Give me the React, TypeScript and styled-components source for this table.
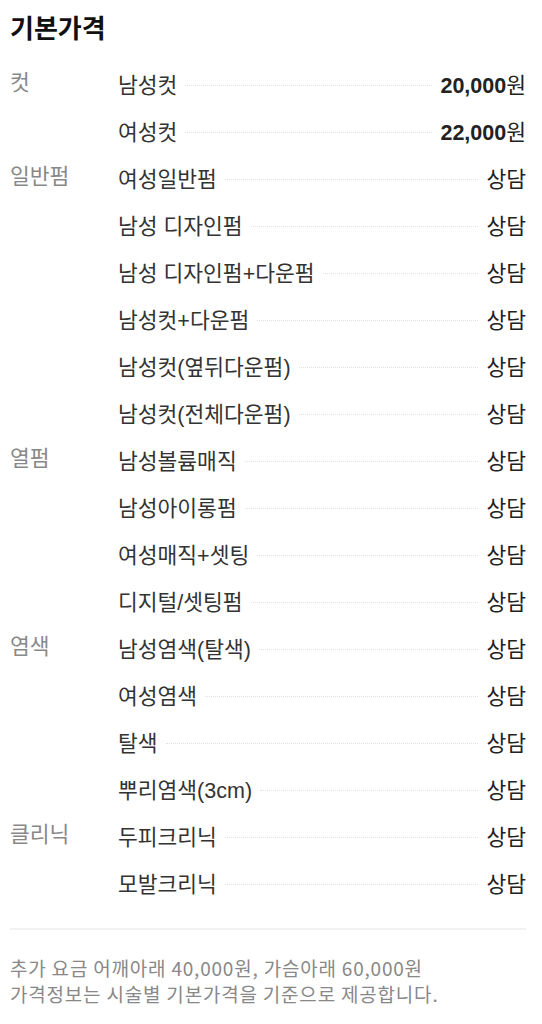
import React from "react";
import styled, { createGlobalStyle } from "styled-components";

const Global = createGlobalStyle`
  html, body { margin: 0; padding: 0; background: #fff; }
  body { font-family: "Liberation Sans", "Noto Sans CJK KR", sans-serif; }
`;

const Page = styled.div`
  padding: 12px 16px 20px 10px;
`;

const Title = styled.h2`
  margin: 0 0 14px 0;
  font-size: 26px;
  line-height: 34px;
  font-weight: 700;
  color: #111;
`;

const Group = styled.div`
  display: grid;
  grid-template-columns: 108px 1fr;
`;

const Category = styled.div`
  font-size: 21.5px;
  line-height: 47px;
  height: 47px;
  color: #888;
`;

const Items = styled.div`
  display: flex;
  flex-direction: column;
`;

const Row = styled.div`
  display: flex;
  align-items: center;
  height: 47px;
  font-size: 21.5px;
  color: #333;
`;

const Name = styled.span`
  white-space: nowrap;
`;

const Dots = styled.span`
  flex: 1;
  margin: 4px 8px 0 8px;
  border-bottom: 1px dotted #e2e2e2;
`;

const Price = styled.span`
  white-space: nowrap;
  color: #222;
`;

const Num = styled.b`
  font-weight: 700;
`;

const Divider = styled.hr`
  border: 0;
  border-top: 2px solid #f1f1f1;
  margin: 22px 0 25px 0;
`;

const Note = styled.p`
  margin: 0;
  font-family: "Noto Sans CJK KR", "Liberation Sans", sans-serif;
  font-size: 19px;
  letter-spacing: 0.8px;
  line-height: 26px;
  color: #888;
`;

type Item = { name: string; price?: string };
const data: { cat: string; items: Item[] }[] = [
  { cat: "컷", items: [{ name: "남성컷", price: "20,000" }, { name: "여성컷", price: "22,000" }] },
  {
    cat: "일반펌",
    items: [
      { name: "여성일반펌" },
      { name: "남성 디자인펌" },
      { name: "남성 디자인펌+다운펌" },
      { name: "남성컷+다운펌" },
      { name: "남성컷(옆뒤다운펌)" },
      { name: "남성컷(전체다운펌)" },
    ],
  },
  {
    cat: "열펌",
    items: [{ name: "남성볼륨매직" }, { name: "남성아이롱펌" }, { name: "여성매직+셋팅" }, { name: "디지털/셋팅펌" }],
  },
  {
    cat: "염색",
    items: [{ name: "남성염색(탈색)" }, { name: "여성염색" }, { name: "탈색" }, { name: "뿌리염색(3cm)" }],
  },
  { cat: "클리닉", items: [{ name: "두피크리닉" }, { name: "모발크리닉" }] },
];

export default function App() {
  return (
    <Page>
      <Global />
      <Title>기본가격</Title>
      {data.map((g) => (
        <Group key={g.cat}>
          <Category>{g.cat}</Category>
          <Items>
            {g.items.map((it) => (
              <Row key={it.name}>
                <Name>{it.name}</Name>
                <Dots />
                <Price>
                  {it.price ? (
                    <>
                      <Num>{it.price}</Num>원
                    </>
                  ) : (
                    "상담"
                  )}
                </Price>
              </Row>
            ))}
          </Items>
        </Group>
      ))}
      <Divider />
      <Note>추가 요금 어깨아래 40,000원, 가슴아래 60,000원</Note>
      <Note>가격정보는 시술별 기본가격을 기준으로 제공합니다.</Note>
    </Page>
  );
}
